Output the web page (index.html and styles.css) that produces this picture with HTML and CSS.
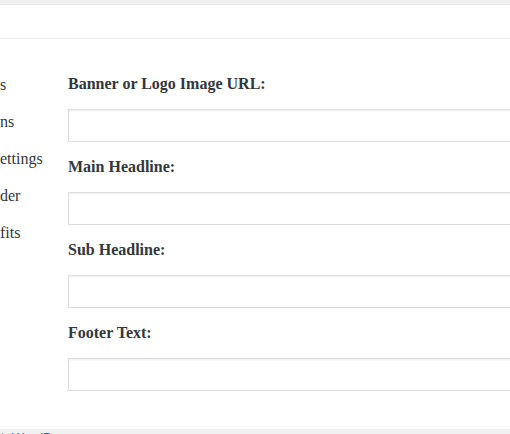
FILE: index.html
```html
<!DOCTYPE html>
<html lang="en">
<head>
  <meta charset="UTF-8" />
  <title>Landing Page Settings</title>
  <link rel="stylesheet" href="styles.css">
</head>
<body>
  <div class="topbar"></div>
  <div class="page-header"></div>

  <div class="layout">
    <ul class="side-nav">
      <li>s</li>
      <li>ns</li>
      <li>ettings</li>
      <li>der</li>
      <li>fits</li>
    </ul>

    <form class="settings-form">
      <div class="field">
        <label for="banner">Banner or Logo Image URL:</label>
        <input type="text" id="banner" />
      </div>
      <div class="field">
        <label for="headline">Main Headline:</label>
        <input type="text" id="headline" />
      </div>
      <div class="field">
        <label for="subheadline">Sub Headline:</label>
        <input type="text" id="subheadline" />
      </div>
      <div class="field">
        <label for="footer">Footer Text:</label>
        <input type="text" id="footer" />
      </div>
    </form>
  </div>

  <footer class="wp-footer">
    <span>h <a href="#">WordPress</a>.</span>
  </footer>
</body>
</html>
```

FILE: styles.css
```css
* {
  box-sizing: border-box;
}

body {
  margin: 0;
  font-family: "Liberation Serif", serif;
  color: #32373c;
  background-color: #fff;
  overflow: hidden;
}

.topbar {
  height: 5px;
  background-color: #f1f1f1;
  border-bottom: 1px solid #e5e5e5;
}

.page-header {
  height: 34px;
  border-bottom: 1px solid #eee;
}

.layout {
  display: flex;
  height: 390px;
}

.side-nav {
  list-style: none;
  margin: 0;
  padding: 27px 0 0;
  width: 68px;
  flex-shrink: 0;
  font-size: 16px;
  line-height: 37px;
  color: #32373c;
}

.settings-form {
  width: 520px;
  flex-shrink: 0;
  padding-top: 35px;
}

.field {
  margin-bottom: 15px;
}

.field label {
  display: block;
  font-size: 16px;
  font-weight: bold;
  line-height: 20px;
  margin-bottom: 15px;
  color: #32373c;
}

.field input {
  display: block;
  width: 100%;
  height: 33px;
  border: 1px solid #ddd;
  box-shadow: inset 0 1px 2px rgba(0,0,0,0.07);
  background: #fff;
}

.wp-footer {
  background-color: #f1f1f1;
  height: 20px;
  padding-top: 1px;
  font-family: "Liberation Sans", sans-serif;
  font-style: italic;
  font-size: 13px;
  color: #777;
}

.wp-footer a {
  color: #0073aa;
  text-decoration: none;
}
```
